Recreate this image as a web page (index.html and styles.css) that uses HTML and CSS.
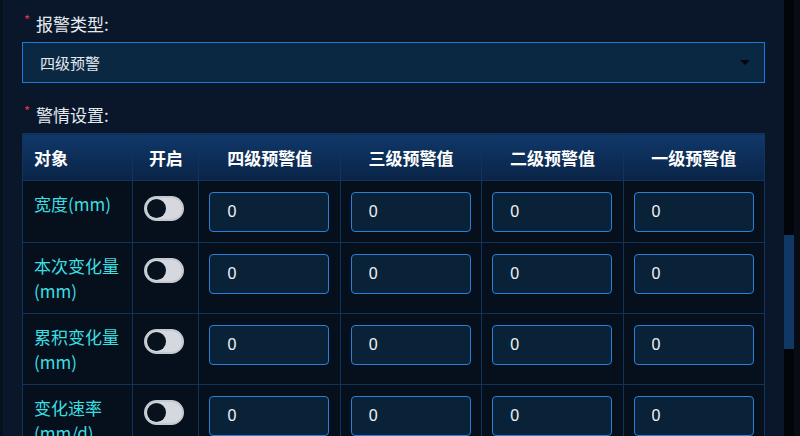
FILE: index.html
```html
<!DOCTYPE html>
<html lang="zh-CN">
<head>
  <meta charset="UTF-8">
  <meta name="viewport" content="width=device-width, initial-scale=1.0">
  <title>预警设置</title>
  <link rel="stylesheet" href="styles.css">
</head>
<body>
  <div class="page">
    <div class="backdrop"></div>
    <div class="dialog">
      <div class="form-item">
        <div class="form-label"><span class="required">*</span>报警类型:</div>
        <div class="select">
          <span class="select-value">四级预警</span>
          <span class="select-caret"></span>
        </div>
      </div>

      <div class="form-item">
        <div class="form-label"><span class="required">*</span>警情设置:</div>
        <table class="alarm-table">
          <colgroup>
            <col class="col-object">
            <col class="col-switch">
            <col class="col-value">
            <col class="col-value">
            <col class="col-value">
            <col class="col-value">
          </colgroup>
          <thead>
            <tr>
              <th class="left">对象</th>
              <th>开启</th>
              <th>四级预警值</th>
              <th>三级预警值</th>
              <th>二级预警值</th>
              <th>一级预警值</th>
            </tr>
          </thead>
          <tbody>
            <tr>
              <td class="name">宽度(mm)</td>
              <td><span class="switch"><span class="knob"></span></span></td>
              <td><input class="value-input" type="text" value="0"></td>
              <td><input class="value-input" type="text" value="0"></td>
              <td><input class="value-input" type="text" value="0"></td>
              <td><input class="value-input" type="text" value="0"></td>
            </tr>
            <tr>
              <td class="name">本次变化量(mm)</td>
              <td><span class="switch"><span class="knob"></span></span></td>
              <td><input class="value-input" type="text" value="0"></td>
              <td><input class="value-input" type="text" value="0"></td>
              <td><input class="value-input" type="text" value="0"></td>
              <td><input class="value-input" type="text" value="0"></td>
            </tr>
            <tr>
              <td class="name">累积变化量(mm)</td>
              <td><span class="switch"><span class="knob"></span></span></td>
              <td><input class="value-input" type="text" value="0"></td>
              <td><input class="value-input" type="text" value="0"></td>
              <td><input class="value-input" type="text" value="0"></td>
              <td><input class="value-input" type="text" value="0"></td>
            </tr>
            <tr>
              <td class="name">变化速率(mm/d)</td>
              <td><span class="switch"><span class="knob"></span></span></td>
              <td><input class="value-input" type="text" value="0"></td>
              <td><input class="value-input" type="text" value="0"></td>
              <td><input class="value-input" type="text" value="0"></td>
              <td><input class="value-input" type="text" value="0"></td>
            </tr>
          </tbody>
        </table>
      </div>
    </div>
    <div class="scrollbar">
      <div class="scrollbar-thumb"></div>
    </div>
    <div class="edge"></div>
  </div>
</body>
</html>
```

FILE: styles.css
```css
html,
body {
  margin: 0;
  padding: 0;
  height: 100%;
  overflow: hidden;
  background-color: #050b14;
  font-family: "Microsoft YaHei", "Noto Sans CJK SC", "Liberation Sans", sans-serif;
  color: #e6ebf2;
}
.page {
  display: flex;
  height: 436px;
}
.backdrop {
  width: 3px;
  background-color: #07111d;
}
.dialog {
  width: 781px;
  box-sizing: border-box;
  padding: 12px 19px 0;
  background-color: #0a172b;
  overflow: hidden;
}
.form-item {
  margin-bottom: 20px;
}
.form-label {
  font-size: 17px;
  line-height: 24px;
  margin-bottom: 6px;
  display: flex;
  align-items: flex-start;
}
.required {
  color: #e0393e;
  font-size: 13px;
  line-height: 16px;
  width: 12px;
  padding-left: 2px;
}
.select {
  display: flex;
  align-items: center;
  justify-content: space-between;
  height: 39px;
  padding: 0 14px 0 17px;
  border: 1px solid #1e78dc;
  background-color: #0b2843;
}
.select-value {
  font-size: 15px;
  color: #e2e8f0;
}
.select-caret {
  width: 0;
  height: 0;
  border-left: 5px solid transparent;
  border-right: 5px solid transparent;
  border-top: 5px solid #02060c;
}
.alarm-table {
  width: 743px;
  border-collapse: collapse;
  table-layout: fixed;
  margin-top: 2px;
}
.col-object {
  width: 110px;
}
.col-switch {
  width: 66px;
}
.col-value {
  width: 141px;
}
.alarm-table th,
.alarm-table td {
  border: 1px solid #11345c;
}
.alarm-table th {
  height: 46px;
  padding: 0 10px;
  font-size: 17px;
  font-weight: bold;
  color: #ffffff;
  text-align: center;
  background: linear-gradient(to bottom, #10386a, #0a2447);
}
.alarm-table th.left {
  text-align: left;
  padding-left: 11px;
}
.alarm-table td {
  padding: 11px 10px 10px;
  vertical-align: top;
  background-color: #06101d;
}
.name {
  color: #3cdfe0;
  font-size: 17px;
  line-height: 24.5px;
  padding-left: 11px !important;
  padding-right: 4px !important;
}
.switch {
  display: block;
  width: 36px;
  height: 21px;
  margin: 4px 0 0 1px;
  border: 2px solid #c4c8cf;
  border-radius: 13px;
  background-color: #d5d8de;
  position: relative;
}
.knob {
  position: absolute;
  left: 1px;
  top: 1px;
  width: 19px;
  height: 19px;
  border-radius: 50%;
  background-color: #08121f;
}
.value-input {
  display: block;
  width: 120px;
  height: 40px;
  box-sizing: border-box;
  padding: 0 0 0 17px;
  border: 1px solid #2b7fd8;
  border-radius: 4px;
  background-color: #0a2238;
  color: #eef2f7;
  font-family: "Liberation Sans", "Noto Sans CJK SC", sans-serif;
  font-size: 16px;
  outline: none;
}
.scrollbar {
  width: 10px;
  background-color: #02060b;
  padding-top: 235px;
}
.scrollbar-thumb {
  height: 114px;
  background-color: #0f3964;
}
.edge {
  flex: 1;
  background-color: #080d15;
}
```
